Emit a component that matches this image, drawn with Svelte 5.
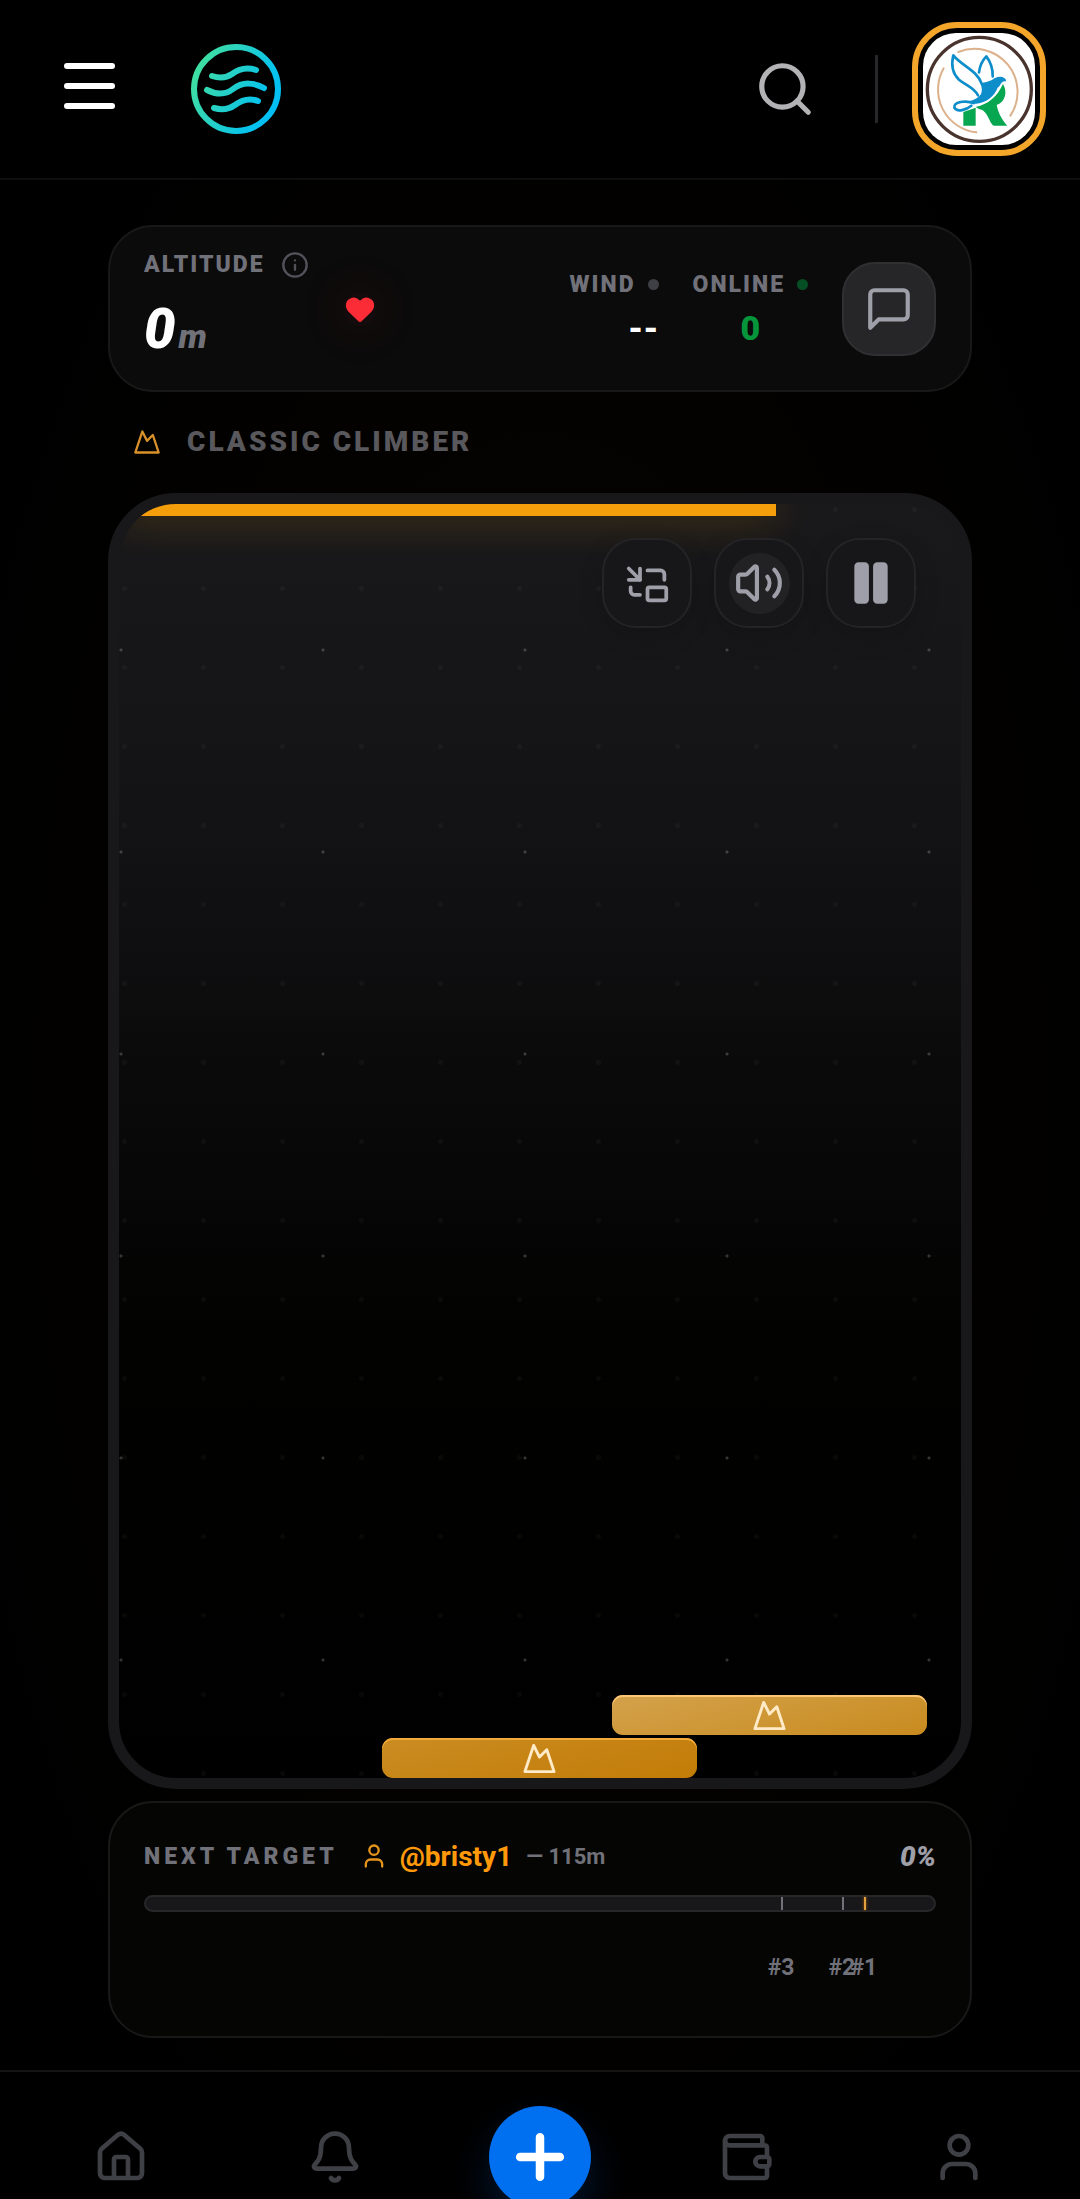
<script lang="ts">
	interface Block {
		left: number;
		bottom: number;
		fresh: boolean;
	}

	interface Rank {
		place: number;
		at: number;
	}

	const blocks: Block[] = [
		{ left: 31.2, bottom: 0, fresh: false },
		{ left: 58.5, bottom: 43, fresh: true }
	];

	const ranks: Rank[] = [
		{ place: 3, at: 80.6 },
		{ place: 2, at: 88.3 },
		{ place: 1, at: 91.1 }
	];

	let altitude = $state(0);
	let timeLeft = $state(78);
	let online = $state(0);
	let muted = $state(false);
	let paused = $state(false);

	const target = { name: '@bristy1', height: 115 };
	let progress = $derived(Math.round((altitude / target.height) * 100));
</script>

{#snippet mountain()}
	<svg class="icon" viewBox="0 0 24 24" aria-hidden="true"><path d="m8 3 4 8 5-5 5 15H2L8 3z" /></svg>
{/snippet}

{#snippet user()}
	<svg class="icon" viewBox="0 0 24 24" aria-hidden="true">
		<path d="M19 21v-2a4 4 0 0 0-4-4H9a4 4 0 0 0-4 4v2" />
		<circle cx="12" cy="7" r="4" />
	</svg>
{/snippet}

<div class="app">
	<header>
		<button type="button" class="menu" aria-label="Menu">
			<span></span>
			<span></span>
			<span></span>
		</button>
		<a href="#home" class="logo" aria-label="Home">
			<svg viewBox="0 0 90 90" aria-hidden="true">
				<defs>
					<linearGradient id="ring" x1="0" y1="20" x2="90" y2="60" gradientUnits="userSpaceOnUse">
						<stop offset="0" stop-color="#43e29a" />
						<stop offset="0.35" stop-color="#2cd3bd" />
						<stop offset="0.8" stop-color="#06c3ee" />
						<stop offset="1" stop-color="#02bdf5" />
					</linearGradient>
				</defs>
				<g fill="none" stroke="url(#ring)" stroke-width="6" stroke-linecap="round">
					<circle cx="45" cy="45" r="42" />
					<path d="M21 32C27 34 34 35 41 30C49 24 56 23 65 26" />
					<path d="M16 46C24 50 33 52 42 45C52 37 64 39 73 44" />
					<path d="M23 64C30 66 37 66 44 61C52 55 59 54 67 57" />
				</g>
			</svg>
		</a>
		<button type="button" class="search" aria-label="Search">
			<svg class="icon" viewBox="0 0 24 24" aria-hidden="true">
				<circle cx="11" cy="11" r="8" />
				<path d="m21 21-4.35-4.35" />
			</svg>
		</button>
		<span class="divider"></span>
		<a href="#account" class="avatar" aria-label="Account">
			<svg viewBox="0 0 336 336" aria-hidden="true">
				<rect width="336" height="336" fill="#fff" />
				<circle cx="169" cy="169" r="156" fill="none" stroke="#49332d" stroke-width="10" />
				<g fill="none" stroke="#dcb18c" stroke-width="6" stroke-linecap="round">
					<path d="M106 57A129 129 0 0 1 262 248" />
					<path d="M62 106A129 129 0 0 0 160 298" />
				</g>
				<path
					fill="#07a650"
					d="M121 237L158 224V278H121ZM158 222C196 214 222 192 240 153C254 176 248 206 221 216C226 240 236 260 253 278H213C198 272 196 232 168 228Z"
				/>
				<g fill="none" stroke="#0d8ecb" stroke-width="8" stroke-linejoin="round" stroke-linecap="round">
					<path d="M176 152C162 112 116 98 91 67C84 96 89 122 108 140C130 158 154 164 165 187" />
					<path d="M168 118C171 94 180 80 190 70C202 86 210 108 209 130" />
					<path d="M152 210C128 201 91 206 94 224C103 240 130 230 145 218" />
				</g>
				<path
					fill="#0d8ecb"
					d="M172 150C194 148 206 142 216 135C232 128 248 132 250 145C232 142 236 156 224 164C214 188 194 208 160 212C140 214 132 210 118 208C146 206 174 194 176 176C178 166 174 158 172 150Z"
				/>
			</svg>
		</a>
	</header>

	<main>
		<section class="card stats">
			<div class="altitude">
				<div class="altitude-label">
					<span class="label">ALTITUDE</span>
					<button type="button" class="info" aria-label="About altitude">
						<svg class="icon" viewBox="0 0 24 24" aria-hidden="true">
							<circle cx="12" cy="12" r="10" />
							<path d="M12 16v-4M12 8h.01" />
						</svg>
					</button>
				</div>
				<div class="altitude-value">{altitude}<span>m</span></div>
			</div>

			<svg class="heart" viewBox="0 0 24 24" role="img" aria-label="1 life">
				<path d="M2 9.5a5.5 5.5 0 0 1 9.591-3.676.56.56 0 0 0 .818 0A5.49 5.49 0 0 1 22 9.5c0 2.29-1.5 4-3 5.5l-5.492 5.313a2 2 0 0 1-3 .019L5 15c-1.5-1.5-3-3.2-3-5.5" />
			</svg>

			<div class="stat wind">
				<div class="stat-label"><span class="label">WIND</span><i class="dot"></i></div>
				<div class="stat-value">--</div>
			</div>
			<div class="stat online">
				<div class="stat-label"><span class="label">ONLINE</span><i class="dot"></i></div>
				<div class="stat-value">{online}</div>
			</div>

			<button type="button" class="chat" aria-label="Chat">
				<svg class="icon" viewBox="0 0 24 24" aria-hidden="true">
					<path d="M21 15a2 2 0 0 1-2 2H7l-4 4V5a2 2 0 0 1 2-2h14a2 2 0 0 1 2 2z" />
				</svg>
			</button>
		</section>

		<h1>{@render mountain()}CLASSIC CLIMBER</h1>

		<section class="game">
			<div class="timer" style="width: {timeLeft}%"></div>

			<div class="controls">
				<button type="button" class="pip" aria-label="Picture in picture">
					<svg class="icon" viewBox="0 0 24 24" aria-hidden="true">
						<path d="M2 10h6V4" />
						<path d="m2 4 6 6" />
						<path d="M21 10V7a2 2 0 0 0-2-2h-7" />
						<path d="M3 14v2a2 2 0 0 0 2 2h3" />
						<rect x="12" y="14" width="10" height="7" rx="1" />
					</svg>
				</button>
				<button type="button" aria-label="Sound" aria-pressed={!muted} onclick={() => (muted = !muted)}>
					<span class="sound">
						<svg class="icon" viewBox="0 0 24 24" aria-hidden="true">
							<path d="M11 4.702a.705.705 0 0 0-1.203-.498L6.413 7.587A1.4 1.4 0 0 1 5.416 8H3a1 1 0 0 0-1 1v6a1 1 0 0 0 1 1h2.416a1.4 1.4 0 0 1 .997.413l3.383 3.384A.705.705 0 0 0 11 19.298z" />
							{#if !muted}
								<path d="M16 9a5 5 0 0 1 0 6" />
								<path d="M19.364 18.364a9 9 0 0 0 0-12.728" />
							{/if}
						</svg>
					</span>
				</button>
				<button type="button" class="pause" aria-label="Pause" aria-pressed={paused} onclick={() => (paused = !paused)}>
					<svg class="icon" viewBox="0 0 24 24" aria-hidden="true">
						<rect x="14" y="3" width="5" height="18" rx="1" />
						<rect x="5" y="3" width="5" height="18" rx="1" />
					</svg>
				</button>
			</div>

			{#each blocks as block}
				<div class="block" class:fresh={block.fresh} style="left: {block.left}%; bottom: {block.bottom}px">
					{@render mountain()}
				</div>
			{/each}
		</section>

		<section class="card target">
			<div class="target-row">
				<span class="target-label">NEXT TARGET</span>
				{@render user()}
				<a href="#player" class="player">{target.name}</a>
				<span class="height">— {target.height}m</span>
				<span class="percent">{progress}%</span>
			</div>
			<div class="track">
				{#each ranks as rank}
					<span class="tick" class:first={rank.place === 1} style="left: {rank.at}%"></span>
				{/each}
			</div>
			<div class="places">
				{#each ranks as rank}
					<span class="place" style="left: {rank.at}%">#{rank.place}</span>
				{/each}
			</div>
		</section>
	</main>

	<nav>
		<a href="#feed" aria-label="Feed">
			<svg class="icon" viewBox="0 0 24 24" aria-hidden="true">
				<path d="M15 21v-8a1 1 0 0 0-1-1h-4a1 1 0 0 0-1 1v8" />
				<path d="M3 10a2 2 0 0 1 .709-1.528l7-6a2 2 0 0 1 2.582 0l7 6A2 2 0 0 1 21 10v9a2 2 0 0 1-2 2H5a2 2 0 0 1-2-2z" />
			</svg>
		</a>
		<a href="#alerts" aria-label="Notifications">
			<svg class="icon" viewBox="0 0 24 24" aria-hidden="true">
				<path d="M10.268 21a2 2 0 0 0 3.464 0" />
				<path d="M3.262 15.326A1 1 0 0 0 4 17h16a1 1 0 0 0 .74-1.673C19.41 13.956 18 12.499 18 8A6 6 0 0 0 6 8c0 4.499-1.411 5.956-2.738 7.326" />
			</svg>
		</a>
		<button type="button" class="create" aria-label="Create">
			<svg class="icon" viewBox="0 0 24 24" aria-hidden="true"><path d="M5 12h14M12 5v14" /></svg>
		</button>
		<a href="#wallet" aria-label="Wallet">
			<svg class="icon" viewBox="0 0 24 24" aria-hidden="true">
				<path d="M19 7V4a1 1 0 0 0-1-1H5a2 2 0 0 0 0 4h15a1 1 0 0 1 1 1v4h-3a2 2 0 0 0 0 4h3a1 1 0 0 0 1-1v-2a1 1 0 0 0-1-1" />
				<path d="M3 5v14a2 2 0 0 0 2 2h15a1 1 0 0 0 1-1v-4" />
			</svg>
		</a>
		<a href="#profile" aria-label="Profile">{@render user()}</a>
	</nav>
</div>

<style>
	:global(body) {
		margin: 0;
		background: #000;
	}

	.app {
		min-height: 100vh;
		display: flex;
		flex-direction: column;
		color: #fff;
		font-family: Roboto, 'Liberation Sans', sans-serif;
		background: radial-gradient(ellipse at center, #060500 0%, #030200 50%, #000 80%);
	}

	button {
		display: flex;
		align-items: center;
		justify-content: center;
		box-sizing: border-box;
		padding: 0;
		border: none;
		background: none;
		color: inherit;
		font: inherit;
		cursor: pointer;
	}

	a {
		color: inherit;
		text-decoration: none;
	}

	svg {
		display: block;
		flex-shrink: 0;
	}

	.icon {
		fill: none;
		stroke: currentColor;
		stroke-width: 2;
		stroke-linecap: round;
		stroke-linejoin: round;
	}

	header {
		display: flex;
		align-items: center;
		height: 178px;
		padding: 0 34px 0 64px;
		border-bottom: 2px solid #0e0e0f;
		background: #000;
	}

	.menu {
		flex-direction: column;
		gap: 14px;
		padding-bottom: 6px;
	}

	.menu span {
		width: 51px;
		height: 6px;
		border-radius: 3px;
		background: #fff;
	}

	.logo {
		margin-left: 76px;
	}

	.logo svg {
		width: 90px;
		height: 90px;
	}

	.search {
		margin-left: auto;
		color: #b3b3b6;
	}

	.search .icon {
		width: 62px;
		height: 62px;
	}

	.divider {
		width: 3px;
		height: 68px;
		margin: 0 34px 0 59px;
		background: #27272a;
	}

	.avatar {
		padding: 5px;
		border: 6px solid #f4a62a;
		border-radius: 45px;
	}

	.avatar svg {
		width: 112px;
		height: 112px;
		border-radius: 33px;
	}

	main {
		width: 80%;
		margin: 45px auto 32px;
	}

	.card {
		border: 2px solid #181818;
		border-radius: 45px;
	}

	.stats {
		display: flex;
		align-items: center;
		gap: 34px;
		padding: 24px 34px;
		background: #0b0b0b;
	}

	.label {
		color: #71717a;
		font-size: 23px;
		font-weight: 900;
		line-height: 24px;
		letter-spacing: 2px;
	}

	.altitude {
		padding-bottom: 9px;
	}

	.altitude-label {
		display: flex;
		align-items: center;
		gap: 16px;
		height: 28px;
	}

	.info {
		color: #52525b;
	}

	.info .icon {
		width: 28px;
		height: 28px;
	}

	.altitude-value {
		display: flex;
		align-items: baseline;
		gap: 3px;
		height: 56px;
		margin-top: 22px;
		font-size: 56px;
		font-style: italic;
		font-weight: 900;
		line-height: 56px;
	}

	.altitude-value span {
		color: #71717a;
		font-size: 34px;
	}

	.heart {
		width: 34px;
		height: 34px;
		border-radius: 50%;
		fill: #fb2c36;
		background: rgba(251, 44, 54, 0.04);
		box-shadow: 0 0 42px 16px rgba(251, 44, 54, 0.04);
	}

	.stat {
		display: flex;
		flex-direction: column;
		align-items: center;
		gap: 14px;
	}

	.stat-label {
		display: flex;
		align-items: center;
		gap: 12px;
	}

	.dot {
		width: 11px;
		height: 11px;
		border-radius: 50%;
		background: #3f3f46;
	}

	.stat-value {
		font-size: 34px;
		font-weight: 900;
		line-height: 34px;
	}

	.wind {
		align-items: flex-end;
		margin-left: auto;
	}

	.online .dot {
		background: #064e23;
	}

	.online .stat-value {
		color: #05963c;
	}

	.chat {
		width: 94px;
		height: 94px;
		border: 2px solid #303033;
		border-radius: 33px;
		background: #262628;
		color: #9f9fa9;
	}

	.chat .icon {
		width: 50px;
		height: 50px;
	}

	h1 {
		display: flex;
		align-items: center;
		gap: 26px;
		margin: 36px 0 37px 25px;
		color: #59585d;
		font-size: 28px;
		font-weight: 900;
		line-height: 28px;
		letter-spacing: 3px;
	}

	h1 :global(.icon) {
		width: 28px;
		height: 28px;
		color: #d8912a;
	}

	.game {
		position: relative;
		box-sizing: border-box;
		aspect-ratio: 2 / 3;
		overflow: hidden;
		border: 11px solid #18181b;
		border-radius: 68px;
		background:
			radial-gradient(circle, rgba(255, 255, 255, 0.2) 1px, transparent 2px) -99px 45px / 202px 202px,
			radial-gradient(circle, rgba(255, 255, 255, 0.03) 2px, transparent 3px) -34px 45px / 79px 79px,
			linear-gradient(#19191b 0%, #131315 25%, #0a0a0b 45%, #020201 65%, #000 100%);
		background-origin: padding-box;
	}

	.timer {
		height: 12px;
		background: #f59e0b;
		box-shadow: 0 0 42px rgba(245, 158, 11, 0.4);
	}

	.controls {
		display: flex;
		justify-content: flex-end;
		gap: 22px;
		padding: 22px 45px 0;
	}

	.controls button {
		width: 90px;
		height: 90px;
		border: 2px solid #242427;
		border-radius: 34px;
		background: #17171a;
		box-shadow: 0 8px 24px rgba(0, 0, 0, 0.15);
		color: #9f9fa9;
	}

	.controls .icon {
		width: 50px;
		height: 50px;
	}

	.controls .pip .icon {
		width: 45px;
		height: 45px;
	}

	.sound {
		display: flex;
		align-items: center;
		justify-content: center;
		width: 61px;
		height: 61px;
		border-radius: 50%;
		background: #222224;
	}

	.pause .icon {
		fill: currentColor;
	}

	.block {
		position: absolute;
		display: flex;
		align-items: center;
		justify-content: center;
		box-sizing: border-box;
		width: 37.5%;
		height: 40px;
		border-radius: 11px;
		background: linear-gradient(165deg, #cb8c22, #c27c07);
		box-shadow: inset 0 2px #f2ab38;
		color: #ffebc8;
	}

	.block.fresh {
		background: linear-gradient(165deg, #d4a24c, #c88b1f);
		box-shadow: inset 0 2px #fdc774;
	}

	.block :global(.icon) {
		width: 35px;
		height: 35px;
	}

	.target {
		margin-top: 12px;
		padding: 34px;
		background: #050504;
	}

	.target-row {
		display: flex;
		align-items: center;
		height: 38px;
		margin-bottom: 20px;
	}

	.target-row :global(.icon) {
		width: 28px;
		height: 28px;
		margin: 0 12px 0 22px;
		color: #e5951c;
	}

	.target-label {
		color: #71717a;
		font-size: 23px;
		font-weight: 900;
		letter-spacing: 4px;
	}

	.player {
		color: #fe9a0a;
		font-size: 28px;
		font-weight: 700;
	}

	.height {
		margin-left: 14px;
		color: #71717a;
		font-size: 22px;
		font-weight: 700;
	}

	.percent {
		margin-left: auto;
		color: #9f9fa9;
		font-size: 28px;
		font-style: italic;
		font-weight: 900;
	}

	.track {
		position: relative;
		height: 13px;
		border: 2px solid #27272a;
		border-radius: 9px;
		background: #18181b;
	}

	.tick {
		position: absolute;
		top: 0;
		bottom: 0;
		width: 2px;
		background: #71717a;
	}

	.tick.first {
		background: #e0a040;
		box-shadow: 0 0 3px #b45f06;
	}

	.places {
		position: relative;
		height: 22px;
		margin: 44px 2px 24px;
	}

	.place {
		position: absolute;
		transform: translateX(-50%);
		color: #71717a;
		font-size: 23px;
		font-weight: 700;
		line-height: 24px;
	}

	nav {
		display: flex;
		align-items: center;
		justify-content: space-between;
		margin-top: auto;
		padding: 57px 62px 14px;
		border-top: 2px solid #141415;
		background: #000;
		overflow: hidden;
	}

	nav a {
		display: flex;
		justify-content: center;
		width: 118px;
		color: #3f3f46;
	}

	nav :global(.icon) {
		width: 56px;
		height: 56px;
	}

	nav .create {
		width: 102px;
		height: 102px;
		margin: -23px 0;
		border-radius: 50%;
		background: #0070f0;
		box-shadow: 0 22px 42px rgba(0, 112, 240, 0.2);
		color: #fff;
	}

	nav .create .icon {
		width: 68px;
		height: 68px;
		stroke-width: 3;
	}
</style>
